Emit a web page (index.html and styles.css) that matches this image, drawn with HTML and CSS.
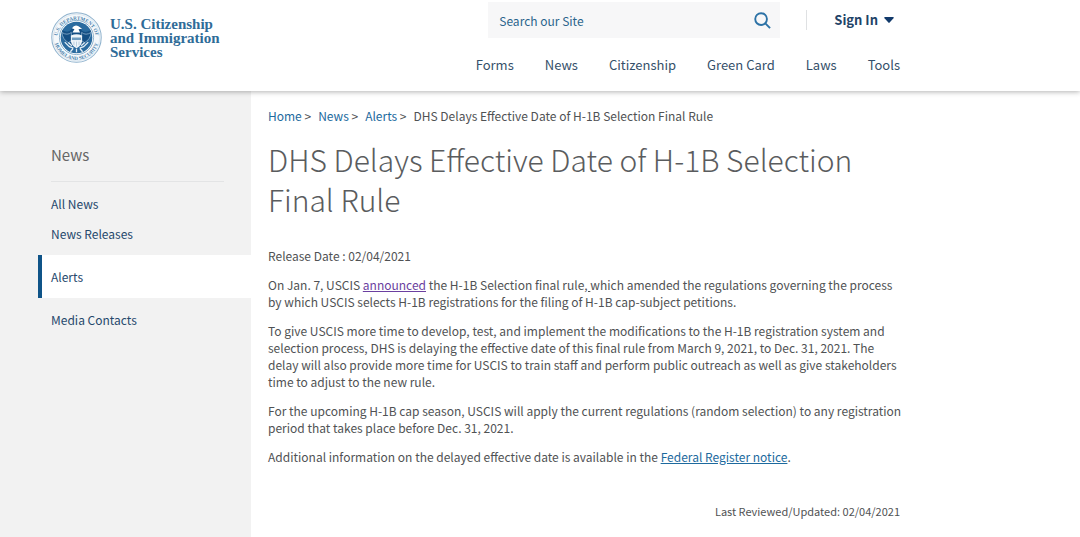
FILE: index.html
```html
<!DOCTYPE html>
<html lang="en">
<head>
<meta charset="utf-8">
<meta name="viewport" content="width=device-width, initial-scale=1">
<title>DHS Delays Effective Date of H-1B Selection Final Rule</title>
<link rel="stylesheet" href="styles.css">
</head>
<body>
<header class="site-header">
  <a class="brand" href="#">
    <svg class="seal" viewBox="0 0 100 100" aria-hidden="true">
      <defs>
        <path id="arc-top" d="M13 62A38 38 0 1 1 87 62"/>
        <path id="arc-bottom" d="M6 50A44 44 0 0 0 94 50"/>
      </defs>
      <circle cx="50" cy="50" r="48.500" fill="#f4f8fb" stroke="#8fb2cd" stroke-width="2"/>
      <circle cx="50" cy="50" r="45.500" fill="none" stroke="#c8dae8" stroke-width="1"/>
      <text class="seal-text"><textPath href="#arc-top" startOffset="50%" text-anchor="middle">U.S. DEPARTMENT OF</textPath></text>
      <text class="seal-text"><textPath href="#arc-bottom" startOffset="50%" text-anchor="middle">HOMELAND SECURITY</textPath></text>
      <circle cx="50" cy="50" r="33.500" fill="#fff" stroke="#6f9cbf" stroke-width="1.500"/>
      <circle cx="50" cy="50" r="31" fill="#2a6b9f"/>
      <path d="M22 36Q35 42 40 34L44 30Q48 26 54 28L61 32L58 34Q64 43 78 36Q77 58 64 62L58 66H42L36 62Q23 58 22 36Z" fill="#144f84"/>
      <path d="M21 40Q32 47 40 40Q39 50 42 55L34 60Q23 54 21 40ZM79 40Q68 47 60 40Q61 50 58 55L66 60Q77 54 79 40Z" fill="none" stroke="#8fb2cd" stroke-width="1.500"/>
      <path d="M41 32Q46 24 54 28L61 33L54 34L57 40H42L46 34Z" fill="#fff"/>
      <path d="M39 46Q50 41 61 46V58Q59 67 50 71Q41 67 39 58Z" fill="#eff5f9"/>
      <path d="M41 50H59V55H41Z" fill="#6f9cbf"/>
      <path d="M45 58V65M50 58V68M55 58V65" stroke="#a9c4d8" stroke-width="1.500"/>
      <path d="M27 59L36 68L44 71M73 59L64 68L56 71M34 60L41 66M66 60L59 66M43 72L38 78M50 72V79M57 72L62 78" fill="none" stroke="#e4eef5" stroke-width="2.500"/>
    </svg>
    <span class="brand-name">U.S. Citizenship<br>and Immigration<br>Services</span>
  </a>
  <div class="header-tools">
    <div class="utility">
      <form class="search" role="search">
        <input class="search-input" type="search" placeholder="Search our Site" aria-label="Search our Site">
        <button class="search-button" type="button" aria-label="Search">
          <svg class="search-icon" viewBox="0 0 18 18" aria-hidden="true"><circle cx="7.500" cy="7.500" r="6.200"/><path d="M12 12L17 17"/></svg>
        </button>
      </form>
      <div class="account">
        <button class="sign-in" type="button">Sign In
          <svg class="caret" viewBox="0 0 10 6" aria-hidden="true"><path d="M1 0H9Q10.500 0 9.500 1.200L5.600 5.600Q5 6.200 4.400 5.600L.5 1.200Q-.5 0 1 0Z"/></svg>
        </button>
      </div>
    </div>
    <nav class="main-nav" aria-label="Main">
      <a href="#">Forms</a><a href="#">News</a><a href="#">Citizenship</a><a href="#">Green Card</a><a href="#">Laws</a><a href="#">Tools</a>
    </nav>
  </div>
</header>
<div class="page">
  <aside class="sidebar">
    <h2 class="sidebar-title">News</h2>
    <nav class="side-nav" aria-label="News">
      <a href="#">All News</a>
      <a href="#">News Releases</a>
      <a class="current" href="#" aria-current="page">Alerts</a>
      <a href="#">Media Contacts</a>
    </nav>
  </aside>
  <main class="content">
    <nav class="breadcrumb" aria-label="Breadcrumb">
      <span><a href="#">Home</a> &gt;</span>
      <span><a href="#">News</a> &gt;</span>
      <span><a href="#">Alerts</a> &gt;</span>
      <span>DHS Delays Effective Date of H-1B Selection Final Rule</span>
    </nav>
    <h1 class="title">DHS Delays Effective Date of H-1B Selection Final Rule</h1>
    <p>Release Date : 02/04/2021</p>
    <p>On Jan. 7, USCIS <a class="visited" href="#">announced</a> the H-1B Selection final rule<u>, </u>which amended the regulations governing the process by which USCIS selects H-1B registrations for the filing of H-1B cap-subject petitions.</p>
    <p>To give USCIS more time to develop, test, and implement the modifications to the H-1B registration system and selection process, DHS is delaying the effective date of this final rule from March 9, 2021, to Dec. 31, 2021. The delay will also provide more time for USCIS to train staff and perform public outreach as well as give stakeholders time to adjust to the new rule.</p>
    <p>For the upcoming H-1B cap season, USCIS will apply the current regulations (random selection) to any registration period that takes place before Dec. 31, 2021.</p>
    <p>Additional information on the delayed effective date is available in the <a href="#">Federal Register notice</a>.</p>
    <p class="reviewed">Last Reviewed/Updated: 02/04/2021</p>
  </main>
</div>
</body>
</html>
```
FILE: styles.css
```css
* { box-sizing: border-box; }

body {
  margin: 0;
  min-height: 100vh;
  display: flex;
  flex-direction: column;
  background: #fff;
  color: #505254;
  font-family: "Noto Sans CJK SC", "Open Sans", sans-serif;
  font-size: 12px;
  line-height: 17px;
}

a { color: #1d6a9e; }

.site-header {
  position: relative;
  display: flex;
  justify-content: space-between;
  align-items: flex-start;
  padding: 2px 180px 16px 51px;
  background: #fff;
  box-shadow: 0 1px 5px rgba(0, 0, 0, .3);
}

.brand {
  display: flex;
  gap: 8px;
  padding-top: 10px;
  color: #2f6c98;
  text-decoration: none;
}
.seal { width: 51px; height: 51px; }
.seal-text {
  font-family: "Liberation Serif", serif;
  font-size: 10px;
  font-weight: 700;
  fill: #4a82ad;
}
.brand-name {
  padding-top: 5px;
  font-family: "Liberation Serif", serif;
  font-size: 15px;
  font-weight: 700;
  line-height: 14px;
}

.utility {
  display: flex;
  justify-content: flex-end;
  align-items: center;
  gap: 26px;
  padding-right: 6px;
}
.search {
  display: flex;
  width: 292px;
  height: 36px;
  background: #f7f7f8;
}
.search-input {
  flex: 1;
  min-width: 0;
  padding: 0 0 0 11px;
  border: 0;
  background: transparent;
  color: #2b658c;
  font: inherit;
}
.search-input::placeholder { color: #2b658c; opacity: 1; }
.search-button {
  padding: 0 9px;
  border: 0;
  background: transparent;
}
.search-icon {
  display: block;
  width: 17px;
  height: 17px;
  fill: none;
  stroke: #2c72a6;
  stroke-width: 2;
}
.account {
  padding-left: 27px;
  border-left: 1px solid #dfe1e3;
}
.sign-in {
  display: flex;
  align-items: center;
  gap: 6px;
  padding: 0;
  border: 0;
  background: transparent;
  color: #1f4468;
  font: inherit;
  font-size: 13px;
  font-weight: 700;
  line-height: 20px;
}
.caret { width: 10px; height: 6px; fill: #123a6b; }

.main-nav {
  display: flex;
  justify-content: flex-end;
  gap: 31px;
  padding-top: 17px;
  font-size: 13px;
  line-height: 20px;
}
.main-nav a { color: #35506a; text-decoration: none; }

.page { flex: 1; display: flex; }

.sidebar {
  flex: 0 0 251px;
  padding: 53px 0 0 38px;
  background: #f2f2f2;
}
.sidebar-title {
  margin: 0 27px 0 13px;
  padding-bottom: 15px;
  border-bottom: 1px solid #e3e4e5;
  color: #666;
  font-size: 15px;
  font-weight: 400;
  line-height: 22px;
}
.side-nav {
  display: flex;
  flex-direction: column;
  gap: 13px;
  padding-top: 13px;
}
.side-nav a {
  padding-left: 13px;
  color: #26486c;
  text-decoration: none;
}
.side-nav .current {
  padding: 13px 0 13px 9px;
  border-left: 4px solid #0f5488;
  background: #fff;
}

.content { flex: 1; padding: 16px 176px 16px 17px; }
.breadcrumb { display: flex; flex-wrap: wrap; gap: 7px; }
.breadcrumb a { text-decoration: none; }
.title {
  margin: 15px 0 28px;
  color: #5a5c5e;
  font-size: 30px;
  font-weight: 200;
  line-height: 40px;
}
.content p { margin: 0 0 12px; }
.content .visited { color: #6b3fa0; }
.content .reviewed {
  margin: 38px 4px 0 0;
  font-size: 11px;
  text-align: right;
}
```
